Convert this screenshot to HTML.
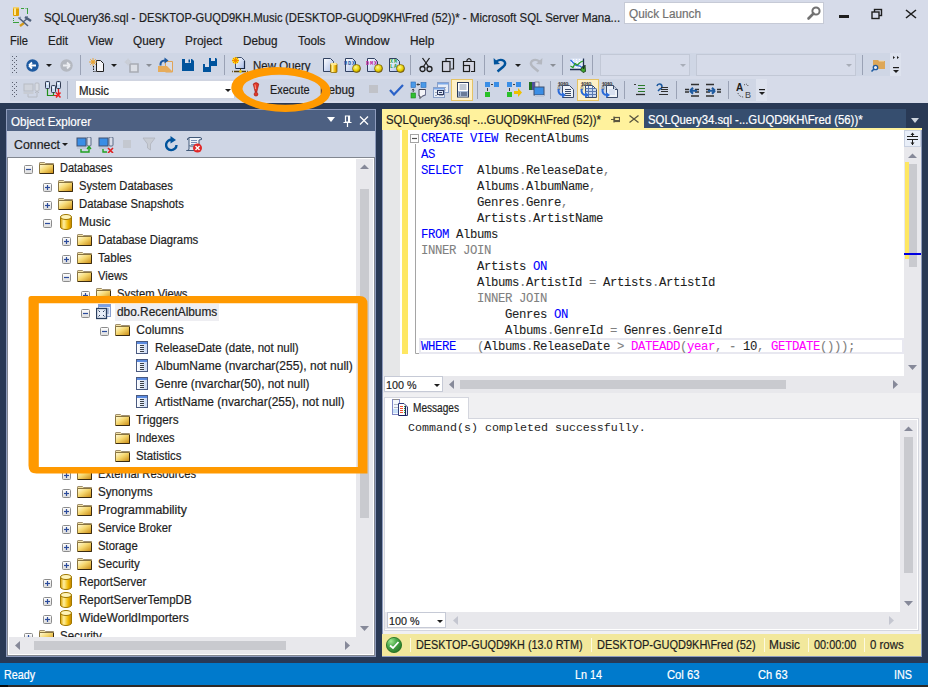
<!DOCTYPE html>
<html><head><meta charset="utf-8"><style>
html,body{margin:0;padding:0;}
body{width:928px;height:687px;overflow:hidden;position:relative;background:#293955;font-family:"Liberation Sans",sans-serif;}
.t{position:absolute;white-space:pre;-webkit-text-stroke:0.2px currentColor;}
.r{position:absolute;}
</style></head><body>
<div class="r" style="left:0px;top:0px;width:928px;height:103px;background:#d6dbe9;"></div>
<svg class="r" style="left:8px;top:0px;" width="30" height="30" viewBox="0 0 30 30">
<rect x="5" y="7" width="6" height="9" rx="1" fill="#e0a000"/><rect x="6" y="8" width="2" height="7" fill="#ffe890"/><rect x="5" y="7" width="6" height="1.5" fill="#f0d070"/>
<path d="M13 8.5h3M17.5 8.5h1M19.5 8v6M5.5 18v1M5.5 20v1M5 22.5h6" stroke="#3aa03a" stroke-width="1"/>
<path d="M12 26 L16 23" stroke="#d49a1a" stroke-width="2.2"/><path d="M10.5 17.5 L20 26" stroke="#50607a" stroke-width="1.6"/>
<path d="M17 17 L23 21" stroke="#50607a" stroke-width="2.4"/><path d="M18 16.5 l2 0 M11 18 l2 -1" stroke="#8090a8" stroke-width="1.2"/><path d="M15 22 L20 18" stroke="#50607a" stroke-width="1.4"/>
</svg>
<div class="t" style="left:44.00px;top:10.34px;font-size:12.00px;line-height:17px;color:#1e1e1e;transform:scaleX(0.9519);transform-origin:0 0;font-family:"Liberation Sans", sans-serif;">SQLQuery36.sql - </div>
<div class="t" style="left:138.60px;top:10.34px;font-size:12.00px;line-height:17px;color:#1e1e1e;transform:scaleX(0.9257);transform-origin:0 0;font-family:"Liberation Sans", sans-serif;">DESKTOP-GUQD9KH.Music </div>
<div class="t" style="left:285.30px;top:10.34px;font-size:12.00px;line-height:17px;color:#1e1e1e;transform:scaleX(0.9395);transform-origin:0 0;font-family:"Liberation Sans", sans-serif;">(DESKTOP-GUQD9KH\Fred (52))* - </div>
<div class="t" style="left:469.90px;top:10.34px;font-size:12.00px;line-height:17px;color:#1e1e1e;transform:scaleX(0.9523);transform-origin:0 0;font-family:"Liberation Sans", sans-serif;">Microsoft SQL Server Mana...</div>
<div class="r" style="left:624px;top:2px;width:198px;height:20px;background:#ffffff;border:1px solid #c6cad6;"></div>
<div class="t" style="left:629.00px;top:5.84px;font-size:12.00px;line-height:17px;color:#717171;transform:scaleX(0.9812);transform-origin:0 0;font-family:"Liberation Sans", sans-serif;">Quick Launch</div>
<svg class="r" style="left:806px;top:5px;" width="16" height="16" viewBox="0 0 16 16"><circle cx="10" cy="6" r="3.6" fill="none" stroke="#717171" stroke-width="2"/><path d="M7.5 8.5 L2.5 13.5" stroke="#717171" stroke-width="2.6" stroke-linecap="round"/></svg>
<div class="r" style="left:839px;top:15px;width:10px;height:3px;background:#1e1e1e;"></div>
<svg class="r" style="left:871px;top:8px;" width="12" height="12" viewBox="0 0 12 12"><rect x="3.5" y="1.5" width="7" height="6" fill="none" stroke="#1e1e1e" stroke-width="1.4"/><rect x="1" y="4" width="7" height="6.5" fill="#d6dbe9" stroke="#1e1e1e" stroke-width="1.4"/></svg>
<svg class="r" style="left:905px;top:9px;" width="12" height="10" viewBox="0 0 12 10"><path d="M1 1 L11 9 M11 1 L1 9" stroke="#1e1e1e" stroke-width="1.6"/></svg>
<div class="t" style="left:10.00px;top:33.04px;font-size:12.00px;line-height:17px;color:#1e1e1e;transform:scaleX(0.9308);transform-origin:0 0;font-family:"Liberation Sans", sans-serif;">File</div>
<div class="t" style="left:48.00px;top:33.04px;font-size:12.00px;line-height:17px;color:#1e1e1e;transform:scaleX(0.9672);transform-origin:0 0;font-family:"Liberation Sans", sans-serif;">Edit</div>
<div class="t" style="left:88.00px;top:33.04px;font-size:12.00px;line-height:17px;color:#1e1e1e;transform:scaleX(0.9692);transform-origin:0 0;font-family:"Liberation Sans", sans-serif;">View</div>
<div class="t" style="left:133.00px;top:33.04px;font-size:12.00px;line-height:17px;color:#1e1e1e;transform:scaleX(0.9792);transform-origin:0 0;font-family:"Liberation Sans", sans-serif;">Query</div>
<div class="t" style="left:185.00px;top:33.04px;font-size:12.00px;line-height:17px;color:#1e1e1e;transform:scaleX(0.9906);transform-origin:0 0;font-family:"Liberation Sans", sans-serif;">Project</div>
<div class="t" style="left:242.50px;top:33.04px;font-size:12.00px;line-height:17px;color:#1e1e1e;transform:scaleX(0.9756);transform-origin:0 0;font-family:"Liberation Sans", sans-serif;">Debug</div>
<div class="t" style="left:297.50px;top:33.04px;font-size:12.00px;line-height:17px;color:#1e1e1e;transform:scaleX(0.9816);transform-origin:0 0;font-family:"Liberation Sans", sans-serif;">Tools</div>
<div class="t" style="left:345.00px;top:33.04px;font-size:12.00px;line-height:17px;color:#1e1e1e;transform:scaleX(1.0426);transform-origin:0 0;font-family:"Liberation Sans", sans-serif;">Window</div>
<div class="t" style="left:409.50px;top:33.04px;font-size:12.00px;line-height:17px;color:#1e1e1e;transform:scaleX(0.9825);transform-origin:0 0;font-family:"Liberation Sans", sans-serif;">Help</div>
<div class="r" style="left:10px;top:53px;width:891px;height:23px;background:#cfd6e5;"></div>
<div class="r" style="left:890px;top:53px;width:11px;height:23px;background:#dde2ee;"></div>
<div class="r" style="left:10px;top:79px;width:757px;height:22px;background:#cfd6e5;"></div>
<div class="r" style="left:756px;top:79px;width:11px;height:22px;background:#dde2ee;"></div>
<svg class="r" style="left:12px;top:56px;" width="5" height="17" viewBox="0 0 5 17"><rect x="0" y="0" width="1" height="1" fill="#5a6070"/><rect x="4" y="0" width="1" height="1" fill="#5a6070"/><rect x="2" y="2" width="1" height="1" fill="#5a6070"/><rect x="0" y="4" width="1" height="1" fill="#5a6070"/><rect x="4" y="4" width="1" height="1" fill="#5a6070"/><rect x="2" y="6" width="1" height="1" fill="#5a6070"/><rect x="0" y="8" width="1" height="1" fill="#5a6070"/><rect x="4" y="8" width="1" height="1" fill="#5a6070"/><rect x="2" y="10" width="1" height="1" fill="#5a6070"/><rect x="0" y="12" width="1" height="1" fill="#5a6070"/><rect x="4" y="12" width="1" height="1" fill="#5a6070"/><rect x="2" y="14" width="1" height="1" fill="#5a6070"/><rect x="0" y="16" width="1" height="1" fill="#5a6070"/><rect x="4" y="16" width="1" height="1" fill="#5a6070"/></svg>
<svg class="r" style="left:12px;top:82px;" width="5" height="15" viewBox="0 0 5 15"><rect x="0" y="0" width="1" height="1" fill="#5a6070"/><rect x="4" y="0" width="1" height="1" fill="#5a6070"/><rect x="2" y="2" width="1" height="1" fill="#5a6070"/><rect x="0" y="4" width="1" height="1" fill="#5a6070"/><rect x="4" y="4" width="1" height="1" fill="#5a6070"/><rect x="2" y="6" width="1" height="1" fill="#5a6070"/><rect x="0" y="8" width="1" height="1" fill="#5a6070"/><rect x="4" y="8" width="1" height="1" fill="#5a6070"/><rect x="2" y="10" width="1" height="1" fill="#5a6070"/><rect x="0" y="12" width="1" height="1" fill="#5a6070"/><rect x="4" y="12" width="1" height="1" fill="#5a6070"/><rect x="2" y="14" width="1" height="1" fill="#5a6070"/></svg>
<svg class="r" style="left:26px;top:59px;" width="13" height="13" viewBox="0 0 13 13"><circle cx="6.5" cy="6.5" r="6.2" fill="#1e5aa0"/><path d="M3 6.5 H10 M3 6.5 L6 3.5 M3 6.5 L6 9.5" stroke="#fff" stroke-width="1.8" fill="none"/></svg>
<svg class="r" style="left:46px;top:64px;" width="6" height="3" viewBox="0 0 6 3"><path d="M0 0 H6 L3 3 Z" fill="#1e1e1e"/></svg>
<svg class="r" style="left:60px;top:59px;" width="13" height="13" viewBox="0 0 13 13"><circle cx="6.5" cy="6.5" r="6.2" fill="#b4b8c0"/><path d="M10 6.5 H3 M10 6.5 L7 3.5 M10 6.5 L7 9.5" stroke="#eceef2" stroke-width="1.8" fill="none"/></svg>
<div class="r" style="left:80px;top:55px;width:1px;height:20px;background:#9aa2b5;"></div>
<svg class="r" style="left:89px;top:58px;" width="16" height="16" viewBox="0 0 16 16"><path d="M7.5 2.5 H11.5 L14.5 5.5 V13.5 H7.5 Z" fill="#f4f4f6" stroke="#1e1e1e" stroke-width="1"/><path d="M4.5 8 V13.5 H7" stroke="#1e1e1e" stroke-width="1" fill="none" stroke-dasharray="1.5 1"/><circle cx="4" cy="4" r="1.8" fill="#f0b040"/><path d="M4 0V8M0 4H8M1.2 1.2L6.8 6.8M6.8 1.2L1.2 6.8" stroke="#e8a030" stroke-width="0.9"/></svg>
<svg class="r" style="left:111px;top:64px;" width="6" height="3" viewBox="0 0 6 3"><path d="M0 0 H6 L3 3 Z" fill="#1e1e1e"/></svg>
<svg class="r" style="left:124px;top:58px;" width="16" height="16" viewBox="0 0 16 16"><path d="M6 6 H14 V14 H6 Z" fill="#dcdfe6" stroke="#a8acb4" stroke-width="1.6"/><circle cx="4" cy="4" r="2" fill="none" stroke="#c8ccd4" stroke-width="1.2"/><path d="M4 0.5V7.5M0.5 4H7.5" stroke="#c8ccd4" stroke-width="1"/></svg>
<svg class="r" style="left:146px;top:64px;" width="6" height="3" viewBox="0 0 6 3"><path d="M0 0 H6 L3 3 Z" fill="#8a8e96"/></svg>
<svg class="r" style="left:158px;top:57px;" width="16" height="16" viewBox="0 0 16 16"><path d="M7.5 4.5 H14.5 V15 H7.5 Z" fill="#d8dce6" stroke="#e0a458" stroke-width="1"/><path d="M1 9 H9 L15 15 H2 Z" fill="#e6ac5c"/><path d="M1 9 V15" stroke="#e6ac5c" stroke-width="2"/><path d="M2.5 8.5 Q2 3.5 7 3.5" stroke="#1e5aa0" stroke-width="2" fill="none"/><path d="M6.5 0.5 L10.5 3.5 L6.5 6.5 Z" fill="#1e5aa0"/></svg>
<svg class="r" style="left:181px;top:58px;" width="14" height="14" viewBox="0 0 14 14"><path d="M1 1 H11 L13 3 V13 H1 Z" fill="#00539c"/><rect x="4" y="1" width="6" height="4" fill="#d6dbe9"/><rect x="7.5" y="1.5" width="1.5" height="3" fill="#00539c"/></svg>
<svg class="r" style="left:202px;top:57px;" width="16" height="16" viewBox="0 0 16 16"><path d="M7 1 H14 L15 2 V9 H7 Z" fill="#00539c"/><rect x="9" y="1" width="4" height="3" fill="#d6dbe9"/><path d="M1 7 H8 L9 8 V15 H1 Z" fill="#00539c"/><rect x="3" y="7" width="4" height="3" fill="#d6dbe9"/></svg>
<div class="r" style="left:224px;top:55px;width:1px;height:20px;background:#9aa2b5;"></div>
<svg class="r" style="left:231px;top:56px;" width="18" height="18" viewBox="0 0 18 18"><path d="M4.5 1.5 H10.5 L13.5 4.5 V12.5 H4.5 Z" fill="url(#docg)" stroke="#405070" stroke-width="1"/><path d="M5 12.5 H13.5 V5" stroke="#1a2a48" stroke-width="1.2" fill="none"/><circle cx="4.5" cy="4.5" r="3.2" fill="#ffe000"/><path d="M4.5 1 V8 M1 4.5 H8 M2 2 L7 7 M7 2 L2 7" stroke="#f08000" stroke-width="0.9"/><path d="M1 15.5 H1.8 M3 15.5 H15 M16.2 15.5 H17" stroke="#5a4008" stroke-width="1.5"/><path d="M9.5 12.5 V15" stroke="#5a4008" stroke-width="1"/><path d="M9.5 13.5 L11 15.5 L9.5 17.5 L8 15.5 Z" fill="#f0d000"/></svg>
<div class="t" style="left:253.00px;top:57.64px;font-size:12.00px;line-height:17px;color:#1e1e1e;transform:scaleX(0.9580);transform-origin:0 0;font-family:"Liberation Sans", sans-serif;">New Query</div>
<svg width="0" height="0" style="position:absolute"><defs><linearGradient id="docg" x1="0" y1="0" x2="1" y2="1"><stop offset="0" stop-color="#ffffff"/><stop offset="1" stop-color="#a8bce8"/></linearGradient><radialGradient id="ballg" cx="0.4" cy="0.35" r="0.7"><stop offset="0" stop-color="#fff890"/><stop offset="0.6" stop-color="#e8d000"/><stop offset="1" stop-color="#806000"/></radialGradient></defs></svg>
<svg class="r" style="left:322px;top:57px;" width="17" height="16" viewBox="0 0 17 16"><path d="M1.5 1.5 H8.5 L11.5 4.5 V14.5 H1.5 Z" fill="url(#docg)" stroke="#304060" stroke-width="1"/><rect x="8.5" y="6.5" width="6.5" height="9" rx="1" fill="url(#cg)" stroke="#8a6a00" stroke-width="0.8"/><ellipse cx="11.75" cy="7" rx="3.2" ry="1.2" fill="#ffe890"/></svg>
<svg class="r" style="left:344px;top:57px;" width="17" height="16" viewBox="0 0 17 16"><path d="M1.5 1.5 H8.5 L11.5 4.5 V14.5 H1.5 Z" fill="url(#docg)" stroke="#304060" stroke-width="1"/><text x="0" y="8" font-size="5.2" font-family="Liberation Mono" fill="#1a5aa8" font-weight="bold" textLength="11">MDX</text><circle cx="12.5" cy="11.5" r="4" fill="url(#ballg)" stroke="#604800" stroke-width="0.6"/></svg>
<svg class="r" style="left:366px;top:57px;" width="17" height="16" viewBox="0 0 17 16"><path d="M1.5 1.5 H8.5 L11.5 4.5 V14.5 H1.5 Z" fill="url(#docg)" stroke="#304060" stroke-width="1"/><text x="0" y="8" font-size="5.2" font-family="Liberation Mono" fill="#c020a0" font-weight="bold" textLength="11">DMX</text><circle cx="12.5" cy="11.5" r="4" fill="url(#ballg)" stroke="#604800" stroke-width="0.6"/></svg>
<svg class="r" style="left:388px;top:57px;" width="17" height="16" viewBox="0 0 17 16"><path d="M1.5 1.5 H8.5 L11.5 4.5 V14.5 H1.5 Z" fill="url(#docg)" stroke="#304060" stroke-width="1"/><text x="2" y="6" font-size="5" font-family="Liberation Mono" fill="#20a040" font-weight="bold" textLength="7">XM</text><text x="2" y="11" font-size="5" font-family="Liberation Mono" fill="#20a040" font-weight="bold" textLength="7">LA</text><circle cx="12.5" cy="11.5" r="4" fill="url(#ballg)" stroke="#604800" stroke-width="0.6"/></svg>
<div class="r" style="left:410px;top:55px;width:1px;height:20px;background:#9aa2b5;"></div>
<svg class="r" style="left:419px;top:57px;" width="14" height="16" viewBox="0 0 14 16"><circle cx="3.5" cy="12" r="2.5" fill="none" stroke="#1e1e1e" stroke-width="1.3"/><circle cx="10.5" cy="12" r="2.5" fill="none" stroke="#1e1e1e" stroke-width="1.3"/><path d="M4.5 9.5 L10.5 1 M9.5 9.5 L3.5 1" stroke="#1e1e1e" stroke-width="1.3"/></svg>
<svg class="r" style="left:441px;top:57px;" width="14" height="16" viewBox="0 0 14 16"><path d="M5 4 V1.5 H12.5 V12 H10" stroke="#1e1e1e" stroke-width="1.2" fill="none"/><rect x="1.5" y="4.5" width="7.5" height="10" fill="#d4d6e2" stroke="#1e1e1e" stroke-width="1.2"/></svg>
<svg class="r" style="left:462px;top:57px;" width="14" height="16" viewBox="0 0 14 16"><path d="M1.5 8.5 V4.5 H12.5 V14.5 H9" stroke="#1e1e1e" stroke-width="1.2" fill="#d4d6e2"/><path d="M5 4.5 V3 Q7 0.3 9 3 V4.5" stroke="#1e1e1e" stroke-width="1.2" fill="none"/><rect x="1.5" y="8.5" width="6" height="6" fill="#d4d6e2" stroke="#1e1e1e" stroke-width="1.2"/></svg>
<div class="r" style="left:484px;top:55px;width:1px;height:20px;background:#9aa2b5;"></div>
<svg class="r" style="left:493px;top:57px;" width="14" height="16" viewBox="0 0 14 16"><path d="M3.5 4.5 Q7.5 1.5 11 4 Q13.5 6.5 10.5 9.5 L4.5 14.5" stroke="#00539c" stroke-width="2.4" fill="none"/><path d="M0.6 1 L1 7.5 L7 7 Z" fill="#00539c"/></svg>
<svg class="r" style="left:515px;top:64px;" width="6" height="3" viewBox="0 0 6 3"><path d="M0 0 H6 L3 3 Z" fill="#1e1e1e"/></svg>
<svg class="r" style="left:529px;top:57px;" width="14" height="16" viewBox="0 0 14 16"><path d="M10.5 4.5 Q6.5 1.5 3 4 Q0.5 6.5 3.5 9.5 L9.5 14.5" stroke="#b4b8c0" stroke-width="2.4" fill="none"/><path d="M13.4 1 L13 7.5 L7 7 Z" fill="#b4b8c0"/></svg>
<svg class="r" style="left:550px;top:64px;" width="6" height="3" viewBox="0 0 6 3"><path d="M0 0 H6 L3 3 Z" fill="#8a8e96"/></svg>
<div class="r" style="left:562px;top:55px;width:1px;height:20px;background:#9aa2b5;"></div>
<svg class="r" style="left:569px;top:57px;" width="18" height="17" viewBox="0 0 18 17"><rect x="1.5" y="1.5" width="13" height="11" fill="#dfe8fa"/><path d="M4.5 2 V12 M7.5 2 V12 M10.5 2 V12 M2 5.5 H14 M2 9 H14" stroke="#ffffff" stroke-width="1" stroke-dasharray="1 1"/><path d="M1 12.5 H14.5 V1.5" stroke="#203050" stroke-width="1.3" fill="none"/><path d="M1.5 3 L4.5 6 L7 8.5 L11 9 L13 10.5" stroke="#2a6ae0" stroke-width="1.3" fill="none"/><path d="M1.5 9 L4 10.5 L6 6.5 L8.5 8 L11 5.5 L14 4" stroke="#2a9a2a" stroke-width="1.3" fill="none"/><path d="M11.5 13 L13.5 9.5 L14.5 12 L16 8 L16.5 14.5 L14 15.5 Z" fill="#40a830" stroke="#103010" stroke-width="0.8"/></svg>
<div class="r" style="left:592px;top:55px;width:1px;height:20px;background:#9aa2b5;"></div>
<div class="r" style="left:600px;top:54px;width:90px;height:22px;background:#d6dbe9;border:1px solid #c2c8d6;box-sizing:border-box;"></div>
<svg class="r" style="left:680px;top:64px;" width="6" height="3" viewBox="0 0 6 3"><path d="M0 0 H6 L3 3 Z" fill="#a8adb8"/></svg>
<div class="r" style="left:696px;top:54px;width:160px;height:22px;background:#d6dbe9;border:1px solid #c2c8d6;box-sizing:border-box;"></div>
<svg class="r" style="left:846px;top:64px;" width="6" height="3" viewBox="0 0 6 3"><path d="M0 0 H6 L3 3 Z" fill="#a8adb8"/></svg>
<div class="r" style="left:862px;top:55px;width:1px;height:20px;background:#9aa2b5;"></div>
<svg class="r" style="left:870px;top:57px;" width="16" height="16" viewBox="0 0 16 16"><path d="M3 3 H8 L9 4 H15 V12 H3 Z" fill="#dda758"/><rect x="9" y="3.5" width="5" height="1" fill="#f4d8a8"/><circle cx="5.5" cy="10.5" r="2.2" fill="#e8ecf4" stroke="#1e5aa0" stroke-width="1.3"/><path d="M4 12 L1.5 14.5" stroke="#1e5aa0" stroke-width="1.6"/></svg>
<svg class="r" style="left:892px;top:55px;" width="8" height="20" viewBox="0 0 8 20"><path d="M1 1 L3 2.5 L1 4 Z M5 1 L7 2.5 L5 4 Z" fill="#1e1e1e"/><rect x="1" y="12" width="6" height="1.2" fill="#1e1e1e"/><path d="M1 15 H7 L4 18 Z" fill="#1e1e1e"/></svg>
<svg class="r" style="left:23px;top:82px;" width="17" height="17" viewBox="0 0 17 17"><rect x="1" y="2" width="9" height="7" fill="#d0d4dc" stroke="#b8bcc4" stroke-width="1"/><rect x="0.5" y="10" width="10" height="2" fill="#c8ccd4"/><rect x="12" y="1" width="4" height="8" rx="1" fill="#d8dce4" stroke="#b8bcc4" stroke-width="1"/><path d="M5 12 V15 H14 V9 M12 11 L14 9 L16 11" stroke="#b8bcc4" stroke-width="1" fill="none"/></svg>
<svg class="r" style="left:44px;top:81px;" width="18" height="18" viewBox="0 0 18 18"><rect x="1.5" y="0.5" width="4" height="7" rx="0.8" fill="#c8dcf4" stroke="#303a50" stroke-width="1"/><rect x="2.5" y="2" width="2" height="1.5" fill="#fff"/><rect x="7.5" y="4.5" width="4" height="7" rx="0.8" fill="#c8dcf4" stroke="#303a50" stroke-width="1"/><rect x="8.5" y="6" width="2" height="1.5" fill="#fff"/><rect x="12.5" y="0.5" width="4" height="7" rx="0.8" fill="#c8dcf4" stroke="#303a50" stroke-width="1"/><rect x="13.5" y="2" width="2" height="1.5" fill="#fff"/><path d="M3.5 8 V14.5 H9.5 V12" stroke="#20901a" stroke-width="1.2" fill="none"/><path d="M14.5 8 V14 M9.5 14.5 H13" stroke="#e02020" stroke-width="1.2" fill="none"/><path d="M12 11.5 L16.5 16.5 M16.5 11.5 L12 16.5" stroke="#f02020" stroke-width="1.5"/></svg>
<div class="r" style="left:67px;top:81px;width:1px;height:18px;background:#9aa2b5;"></div>
<div class="r" style="left:75px;top:80px;width:160px;height:19px;background:#ffffff;border:1px solid #d0d4e0;box-sizing:border-box;"></div>
<div class="t" style="left:78.60px;top:82.94px;font-size:12.00px;line-height:17px;color:#1e1e1e;transform:scaleX(0.9573);transform-origin:0 0;font-family:"Liberation Sans", sans-serif;">Music</div>
<svg class="r" style="left:225px;top:89px;" width="6" height="3" viewBox="0 0 6 3"><path d="M0 0 H6 L3 3 Z" fill="#1e1e1e"/></svg>
<svg class="r" style="left:252px;top:82px;" width="8" height="15" viewBox="0 0 8 15"><path d="M1.2 2 Q4 -0.8 6.8 2 L4.8 10 H3.2 Z" fill="#e03828" stroke="#a01810" stroke-width="0.6"/><circle cx="4" cy="12.2" r="1.9" fill="#e03828" stroke="#a01810" stroke-width="0.6"/><path d="M3 2.5 L3.6 7" stroke="#ffb0a0" stroke-width="0.8"/></svg>
<div class="t" style="left:269.80px;top:81.84px;font-size:12.00px;line-height:17px;color:#1e1e1e;transform:scaleX(0.9110);transform-origin:0 0;font-family:"Liberation Sans", sans-serif;">Execute</div>
<div class="t" style="left:320.00px;top:81.84px;font-size:12.00px;line-height:17px;color:#1e1e1e;transform:scaleX(0.9756);transform-origin:0 0;font-family:"Liberation Sans", sans-serif;">Debug</div>
<div class="r" style="left:369px;top:85px;width:9px;height:8px;background:#c0c2c8;"></div>
<svg class="r" style="left:389px;top:84px;" width="15" height="12" viewBox="0 0 15 12"><path d="M1 6 L5 10.5 L14 1" stroke="#2a62c8" stroke-width="2.2" fill="none"/></svg>
<svg class="r" style="left:410px;top:81px;" width="17" height="18" viewBox="0 0 17 18"><rect x="1" y="1" width="4.5" height="5.5" fill="#4a9ae8" stroke="#2a6ab8" stroke-width="0.6"/><rect x="11" y="1.5" width="5" height="5" fill="#4a9ae8" stroke="#2a6ab8" stroke-width="0.6"/><path d="M7 3.5 H10 M7 3.5 L8.2 2.3 M7 3.5 L8.2 4.7" stroke="#303030" stroke-width="0.9" fill="none"/><rect x="1" y="12" width="4.5" height="5" fill="#30c030" stroke="#208020" stroke-width="0.6"/><path d="M3.2 11 V8 M3.2 8 L2 9.2 M3.2 8 L4.4 9.2" stroke="#303030" stroke-width="0.9" fill="none"/><path d="M9 8.5 H15.5 V14 L12.5 15 L10 17.5 V15 H9 Z" fill="#f4f4f8" stroke="#404050" stroke-width="1"/><path d="M15.5 9 V14 L12.5 15" stroke="#6a7090" stroke-width="1" fill="none"/></svg>
<svg class="r" style="left:432px;top:81px;" width="17" height="18" viewBox="0 0 17 18"><rect x="5.5" y="1.5" width="11" height="10" fill="#e8eef8" stroke="#8aa0c8" stroke-width="1"/><rect x="6" y="2" width="10" height="1.5" fill="#7aa8e8"/><path d="M8 6.5 H10 M11.5 6.5 H14 M8 9 H10 M11.5 9 H14" stroke="#a0a8b8" stroke-width="1"/><rect x="1.5" y="6.5" width="11" height="10" fill="#e8eef8" stroke="#8aa0c8" stroke-width="1"/><rect x="2" y="7" width="10" height="1.5" fill="#7aa8e8"/><path d="M3 11.5 H5 M3 14.5 H5 M7 14.5 H11" stroke="#a0a8b8" stroke-width="1"/><rect x="5.5" y="9.5" width="6" height="4" fill="#e0e8f4" stroke="#303a60" stroke-width="1"/><path d="M7 11.5 H10" stroke="#303a60" stroke-width="1"/></svg>
<div class="r" style="left:451px;top:79px;width:22px;height:22px;background:#fdf0c8;border:1px solid #e5c365;box-sizing:border-box;"></div>
<svg class="r" style="left:456px;top:82px;" width="14" height="16" viewBox="0 0 14 16"><rect x="1.5" y="0.5" width="11" height="14.5" fill="#ffffff" stroke="#2a3a5a" stroke-width="1"/><path d="M3.5 3 H10.5 M3.5 5 H10.5 M3.5 7 H10.5" stroke="#8090a8" stroke-width="1"/><rect x="2" y="9" width="10" height="5.5" fill="#a8bcd8"/><path d="M3 11 H4 M5 11 H11 M3 13 H4 M5 13 H11" stroke="#2a3a5a" stroke-width="1"/></svg>
<div class="r" style="left:477px;top:81px;width:1px;height:18px;background:#9aa2b5;"></div>
<svg class="r" style="left:484px;top:81px;" width="17" height="17" viewBox="0 0 17 17"><rect x="1" y="1" width="5" height="5" fill="#3a8ee6"/><rect x="10" y="1" width="5" height="5" fill="#3a8ee6"/><path d="M7 3.5 H9" stroke="#404040" stroke-width="1"/><rect x="1" y="11" width="5" height="5" fill="#28c028"/><path d="M3.5 7 V10" stroke="#404040" stroke-width="1"/></svg>
<svg class="r" style="left:506px;top:81px;" width="17" height="17" viewBox="0 0 17 17"><rect x="1" y="1" width="5" height="5" fill="#3a8ee6"/><rect x="10" y="1" width="5" height="5" fill="#3a8ee6"/><path d="M7 3.5 H9" stroke="#404040" stroke-width="1"/><rect x="1" y="11" width="5" height="5" fill="#28c028"/><path d="M3.5 7 V10" stroke="#404040" stroke-width="1"/><path d="M8 10 H12 V7 L16 11.5 L12 16 V13 H8 Z" fill="#f0c000"/></svg>
<svg class="r" style="left:528px;top:81px;" width="17" height="18" viewBox="0 0 17 18"><rect x="1" y="1" width="3" height="8" fill="#207020"/><rect x="4" y="1" width="3" height="8" fill="#5050a0"/><rect x="7" y="1" width="4" height="8" fill="#e0e0e8" stroke="#606070" stroke-width="0.6"/><rect x="6" y="6" width="10" height="8" fill="#3a8ee6" stroke="#405070" stroke-width="1"/><rect x="7" y="14" width="9" height="2" fill="#c0c8d8"/></svg>
<div class="r" style="left:550px;top:81px;width:1px;height:18px;background:#9aa2b5;"></div>
<svg class="r" style="left:557px;top:80px;" width="17" height="19" viewBox="0 0 17 19"><text x="0.5" y="5.5" font-size="6" font-family="Liberation Mono" font-weight="bold" fill="#404040" textLength="11">1010</text><text x="0.5" y="9.5" font-size="5" font-family="Liberation Mono" fill="#404040">0</text><path d="M5.5 5.5 H12.5 L16.5 9.5 V17.5 H5.5 Z" fill="#eef2f8" stroke="#3a4a68" stroke-width="1"/><path d="M8 9.5 H14 M8 11.5 H14 M8 13.5 H14 M8 15.5 H14" stroke="#3a4a68" stroke-width="1"/><path d="M1.5 9 Q1 15 6 15" stroke="#2a6ad8" stroke-width="2" fill="none"/><path d="M5 12 L9 15 L5 18 Z" fill="#2a6ad8"/></svg>
<div class="r" style="left:577px;top:79px;width:22px;height:22px;background:#fdf0c8;border:1px solid #e5c365;box-sizing:border-box;"></div>
<svg class="r" style="left:580px;top:80px;" width="17" height="19" viewBox="0 0 17 19"><text x="0.5" y="5.5" font-size="6" font-family="Liberation Mono" font-weight="bold" fill="#404040" textLength="11">1010</text><text x="0.5" y="9.5" font-size="5" font-family="Liberation Mono" fill="#404040">0</text><path d="M5.5 5.5 H12.5 L16.5 9.5 V17.5 H5.5 Z" fill="#eef2f8" stroke="#3a4a68" stroke-width="1"/><rect x="6" y="8" width="10" height="9" fill="#c8d8f0"/><path d="M5.5 8.5 H16.5 M5.5 11.5 H16.5 M5.5 14.5 H16.5 M8.5 6 V17 M12.5 6 V17" stroke="#5a7ab0" stroke-width="1"/><path d="M1.5 9 Q1 15 6 15" stroke="#2a6ad8" stroke-width="2" fill="none"/><path d="M5 12 L9 15 L5 18 Z" fill="#2a6ad8"/></svg>
<svg class="r" style="left:601px;top:80px;" width="17" height="19" viewBox="0 0 17 19"><text x="0.5" y="5.5" font-size="6" font-family="Liberation Mono" font-weight="bold" fill="#404040" textLength="11">1010</text><text x="0.5" y="9.5" font-size="5" font-family="Liberation Mono" fill="#404040">0</text><path d="M5.5 5.5 H12.5 L16.5 9.5 V17.5 H5.5 Z" fill="#eef2f8" stroke="#3a4a68" stroke-width="1"/><path d="M12.5 5.5 V9.5 H16.5" fill="#c0cce0" stroke="#3a4a68" stroke-width="1"/><rect x="8" y="9" width="6" height="6" fill="#d8e0f0"/><path d="M1.5 9 Q1 15 6 15" stroke="#2a6ad8" stroke-width="2" fill="none"/><path d="M5 12 L9 15 L5 18 Z" fill="#2a6ad8"/></svg>
<div class="r" style="left:624px;top:81px;width:1px;height:18px;background:#9aa2b5;"></div>
<svg class="r" style="left:633px;top:83px;" width="13" height="13" viewBox="0 0 13 13"><path d="M1 1.5 H3" stroke="#404040" stroke-width="1"/><path d="M5 2.5 H12 M5 5.5 H12 M5 8.5 H12" stroke="#2a7a2a" stroke-width="1.2"/><path d="M3 11.5 H12" stroke="#303030" stroke-width="1.3"/></svg>
<svg class="r" style="left:655px;top:83px;" width="14" height="13" viewBox="0 0 14 13"><path d="M2 3 A2.5 2.5 0 1 1 5 6 L3 8" stroke="#1e5aa0" stroke-width="1.6" fill="none"/><path d="M6 4.5 H13 M6 6.5 H13 M6 8.5 H13 M4 11.5 H13" stroke="#303030" stroke-width="1.1"/></svg>
<div class="r" style="left:676px;top:81px;width:1px;height:18px;background:#9aa2b5;"></div>
<svg class="r" style="left:685px;top:83px;" width="15" height="14" viewBox="0 0 15 14"><path d="M6 1.5 H14 M0 6.5 H4 M10 6.5 H14 M0 9 H4 M10 9 H14 M6 13 H14" stroke="#303030" stroke-width="1.4"/><path d="M5 7.8 H12 M5 7.8 L8 4.8 M5 7.8 L8 10.8" stroke="#1e5aa0" stroke-width="2" fill="none"/></svg>
<svg class="r" style="left:706px;top:83px;" width="15" height="14" viewBox="0 0 15 14"><path d="M0 1.5 H8 M0 6.5 H4 M11 6.5 H15 M0 9 H4 M11 9 H15 M0 13 H8" stroke="#303030" stroke-width="1.4"/><path d="M2 7.8 H9 M9 7.8 L6 4.8 M9 7.8 L6 10.8" stroke="#1e5aa0" stroke-width="2" fill="none"/></svg>
<div class="r" style="left:728px;top:81px;width:1px;height:18px;background:#9aa2b5;"></div>
<svg class="r" style="left:736px;top:82px;" width="17" height="17" viewBox="0 0 17 17"><text x="0" y="9" font-size="10" font-family="Liberation Sans" font-weight="bold" fill="#1e1e1e">A</text><text x="9" y="16" font-size="9" font-family="Liberation Sans" fill="#404040">B</text><path d="M8 3 Q11 1 12 4 M2 11 Q3 15 8 15" stroke="#303030" stroke-width="0.9" stroke-dasharray="1 1" fill="none"/></svg>
<svg class="r" style="left:759px;top:89px;" width="6" height="9" viewBox="0 0 6 9"><rect x="0" y="0" width="6" height="1.2" fill="#1e1e1e"/><path d="M0 3 H6 L3 6 Z" fill="#1e1e1e"/></svg>
<div class="r" style="left:6px;top:109px;width:370px;height:548px;background:#8e9bbc;"></div>
<div class="r" style="left:7px;top:110px;width:368px;height:21px;background:#4d6082;"></div>
<div class="t" style="left:11.00px;top:113.84px;font-size:12.00px;line-height:17px;color:#ffffff;transform:scaleX(0.9673);transform-origin:0 0;font-family:"Liberation Sans", sans-serif;">Object Explorer</div>
<svg class="r" style="left:327px;top:117px;" width="8" height="5" viewBox="0 0 8 5"><path d="M0 0 H8 L4 5 Z" fill="#ffffff"/></svg>
<svg class="r" style="left:343px;top:115px;" width="9" height="12" viewBox="0 0 9 12"><path d="M2.5 1 H6.5 V7 H2.5 Z" fill="none" stroke="#fff" stroke-width="1.2"/><path d="M0.5 7.5 H8.5 M4.5 7.5 V12" stroke="#fff" stroke-width="1.2"/><rect x="5" y="1" width="1.5" height="6" fill="#fff"/></svg>
<svg class="r" style="left:359px;top:116px;" width="10" height="9" viewBox="0 0 10 9"><path d="M1 0.5 L9 8.5 M9 0.5 L1 8.5" stroke="#fff" stroke-width="1.3"/></svg>
<div class="r" style="left:7px;top:131px;width:368px;height:26px;background:#cfd6e5;"></div>
<div class="t" style="left:14.00px;top:136.94px;font-size:12.00px;line-height:17px;color:#1e1e1e;transform:scaleX(1.0291);transform-origin:0 0;font-family:"Liberation Sans", sans-serif;">Connect</div>
<svg class="r" style="left:62px;top:143px;" width="6" height="3" viewBox="0 0 6 3"><path d="M0 0 H6 L3 3 Z" fill="#1e1e1e"/></svg>
<svg class="r" style="left:76px;top:137px;" width="16" height="16" viewBox="0 0 16 16"><rect x="1" y="1" width="9" height="8" fill="#3a8ee6" stroke="#405070" stroke-width="1"/><rect x="1" y="10" width="9" height="2" fill="#c0c8d8"/><rect x="11" y="0" width="4" height="9" rx="1" fill="#d8dce8" stroke="#405070" stroke-width="0.8"/><path d="M5 12 V15 H13 V10" stroke="#20a020" stroke-width="1.4" fill="none"/><path d="M11 12 L13 9.5 L15 12" stroke="#20a020" stroke-width="1.4" fill="none"/></svg>
<svg class="r" style="left:98px;top:137px;" width="16" height="16" viewBox="0 0 16 16"><rect x="1" y="1" width="9" height="8" fill="#3a8ee6" stroke="#405070" stroke-width="1"/><rect x="1" y="10" width="9" height="2" fill="#c0c8d8"/><rect x="11" y="0" width="4" height="9" rx="1" fill="#d8dce8" stroke="#405070" stroke-width="0.8"/><path d="M5 12 V15 H9" stroke="#20a020" stroke-width="1.4" fill="none"/><path d="M10 11 L15 16 M15 11 L10 16" stroke="#e02020" stroke-width="1.6"/></svg>
<div class="r" style="left:123px;top:140px;width:8px;height:8px;background:#c4c8d0;"></div>
<svg class="r" style="left:142px;top:137px;" width="14" height="14" viewBox="0 0 14 14"><path d="M1 1 H13 L8.5 7 V13 L5.5 11 V7 Z" fill="#c8ccd4" stroke="#b0b4bc" stroke-width="0.8"/></svg>
<svg class="r" style="left:165px;top:136px;" width="14" height="16" viewBox="0 0 14 16"><path d="M11.5 9 A5.2 5.2 0 1 1 7 3.8" stroke="#00539c" stroke-width="2.4" fill="none"/><path d="M5.5 0 L11 4 L5.5 7.5 Z" fill="#00539c"/></svg>
<svg class="r" style="left:185px;top:136px;" width="18" height="17" viewBox="0 0 18 17"><path d="M4 1.5 H15 Q17 1.5 16.5 3.5 L14 4 V10 H4 Z" fill="#f0f4fa" stroke="#405878" stroke-width="1"/><path d="M6 4.5 H12 M6 6.5 H12 M6 8.5 H10" stroke="#7a90b8" stroke-width="1"/><path d="M4 2 Q2 2 2.5 4" stroke="#405878" stroke-width="1" fill="none"/><path d="M4 10 V13 Q4 15 1.5 14.5 H11" stroke="#405878" stroke-width="1" fill="#e0e8f4"/><circle cx="12.5" cy="12" r="4.5" fill="#e02828"/><path d="M10.5 10 L14.5 14 M14.5 10 L10.5 14" stroke="#fff" stroke-width="1.4"/></svg>
<div class="r" style="left:7px;top:157px;width:368px;height:499px;background:#828790;"></div>
<div class="r" style="left:8px;top:158px;width:366px;height:497px;background:#ffffff;"></div>
<svg width="0" height="0" style="position:absolute"><defs><linearGradient id="fg" x1="0" y1="0" x2="1" y2="1"><stop offset="0" stop-color="#fffce0"/><stop offset="0.45" stop-color="#f6d870"/><stop offset="1" stop-color="#c88810"/></linearGradient><linearGradient id="cg" x1="0" y1="0" x2="1" y2="0"><stop offset="0" stop-color="#d8a000"/><stop offset="0.3" stop-color="#fff0a0"/><stop offset="0.7" stop-color="#f0b800"/><stop offset="1" stop-color="#c08000"/></linearGradient><linearGradient id="bx" x1="0" y1="0" x2="0" y2="1"><stop offset="0" stop-color="#ffffff"/><stop offset="1" stop-color="#dcdcdc"/></linearGradient></defs></svg>
<svg class="r" style="left:24px;top:165px;" width="9" height="9" viewBox="0 0 9 9"><rect x="0.5" y="0.5" width="8" height="8" rx="1" fill="url(#bx)" stroke="#8c8c8c" stroke-width="1"/><path d="M2 4.5 H7" stroke="#2c4c9c" stroke-width="1.2"/></svg>
<svg class="r" style="left:39px;top:162px;" width="15" height="12" viewBox="0 0 15 12"><path d="M0.5 2 V1 Q0.5 0.5 1 0.5 H5.5 L6.5 1.5 H14.5 V11.5 H0.5 Z" fill="#f4e4a8" stroke="#a09070" stroke-width="1"/><path d="M0.5 2.5 H14.5 V11.5 H0.5 Z" fill="url(#fg)" stroke="#8a7540" stroke-width="1"/><path d="M1 11.5 H14.5 V3" stroke="#3a2a10" stroke-width="1" fill="none"/></svg>
<div class="t" style="left:60.30px;top:159.84px;font-size:12.00px;line-height:17px;color:#1e1e1e;transform:scaleX(0.9133);transform-origin:0 0;font-family:"Liberation Sans", sans-serif;">Databases</div>
<svg class="r" style="left:43px;top:183px;" width="9" height="9" viewBox="0 0 9 9"><rect x="0.5" y="0.5" width="8" height="8" rx="1" fill="url(#bx)" stroke="#8c8c8c" stroke-width="1"/><path d="M2 4.5 H7" stroke="#2c4c9c" stroke-width="1.2"/><path d="M4.5 2 V7" stroke="#2c4c9c" stroke-width="1.2"/></svg>
<svg class="r" style="left:58px;top:180px;" width="15" height="12" viewBox="0 0 15 12"><path d="M0.5 2 V1 Q0.5 0.5 1 0.5 H5.5 L6.5 1.5 H14.5 V11.5 H0.5 Z" fill="#f4e4a8" stroke="#a09070" stroke-width="1"/><path d="M0.5 2.5 H14.5 V11.5 H0.5 Z" fill="url(#fg)" stroke="#8a7540" stroke-width="1"/><path d="M1 11.5 H14.5 V3" stroke="#3a2a10" stroke-width="1" fill="none"/></svg>
<div class="t" style="left:79.30px;top:177.84px;font-size:12.00px;line-height:17px;color:#1e1e1e;transform:scaleX(0.9313);transform-origin:0 0;font-family:"Liberation Sans", sans-serif;">System Databases</div>
<svg class="r" style="left:43px;top:201px;" width="9" height="9" viewBox="0 0 9 9"><rect x="0.5" y="0.5" width="8" height="8" rx="1" fill="url(#bx)" stroke="#8c8c8c" stroke-width="1"/><path d="M2 4.5 H7" stroke="#2c4c9c" stroke-width="1.2"/><path d="M4.5 2 V7" stroke="#2c4c9c" stroke-width="1.2"/></svg>
<svg class="r" style="left:58px;top:198px;" width="15" height="12" viewBox="0 0 15 12"><path d="M0.5 2 V1 Q0.5 0.5 1 0.5 H5.5 L6.5 1.5 H14.5 V11.5 H0.5 Z" fill="#f4e4a8" stroke="#a09070" stroke-width="1"/><path d="M0.5 2.5 H14.5 V11.5 H0.5 Z" fill="url(#fg)" stroke="#8a7540" stroke-width="1"/><path d="M1 11.5 H14.5 V3" stroke="#3a2a10" stroke-width="1" fill="none"/></svg>
<div class="t" style="left:79.30px;top:195.84px;font-size:12.00px;line-height:17px;color:#1e1e1e;transform:scaleX(0.9415);transform-origin:0 0;font-family:"Liberation Sans", sans-serif;">Database Snapshots</div>
<svg class="r" style="left:43px;top:219px;" width="9" height="9" viewBox="0 0 9 9"><rect x="0.5" y="0.5" width="8" height="8" rx="1" fill="url(#bx)" stroke="#8c8c8c" stroke-width="1"/><path d="M2 4.5 H7" stroke="#2c4c9c" stroke-width="1.2"/></svg>
<svg class="r" style="left:60px;top:214px;" width="12" height="16" viewBox="0 0 12 16"><path d="M0.5 3 V13 A5.5 2.5 0 0 0 11.5 13 V3 Z" fill="url(#cg)" stroke="#a07800" stroke-width="1"/><ellipse cx="6" cy="3" rx="5.5" ry="2.5" fill="#fff4b8" stroke="#a07800" stroke-width="1"/></svg>
<div class="t" style="left:79.30px;top:213.84px;font-size:12.00px;line-height:17px;color:#1e1e1e;transform:scaleX(1.0052);transform-origin:0 0;font-family:"Liberation Sans", sans-serif;">Music</div>
<svg class="r" style="left:62px;top:237px;" width="9" height="9" viewBox="0 0 9 9"><rect x="0.5" y="0.5" width="8" height="8" rx="1" fill="url(#bx)" stroke="#8c8c8c" stroke-width="1"/><path d="M2 4.5 H7" stroke="#2c4c9c" stroke-width="1.2"/><path d="M4.5 2 V7" stroke="#2c4c9c" stroke-width="1.2"/></svg>
<svg class="r" style="left:77px;top:234px;" width="15" height="12" viewBox="0 0 15 12"><path d="M0.5 2 V1 Q0.5 0.5 1 0.5 H5.5 L6.5 1.5 H14.5 V11.5 H0.5 Z" fill="#f4e4a8" stroke="#a09070" stroke-width="1"/><path d="M0.5 2.5 H14.5 V11.5 H0.5 Z" fill="url(#fg)" stroke="#8a7540" stroke-width="1"/><path d="M1 11.5 H14.5 V3" stroke="#3a2a10" stroke-width="1" fill="none"/></svg>
<div class="t" style="left:98.30px;top:231.84px;font-size:12.00px;line-height:17px;color:#1e1e1e;transform:scaleX(0.9457);transform-origin:0 0;font-family:"Liberation Sans", sans-serif;">Database Diagrams</div>
<svg class="r" style="left:62px;top:255px;" width="9" height="9" viewBox="0 0 9 9"><rect x="0.5" y="0.5" width="8" height="8" rx="1" fill="url(#bx)" stroke="#8c8c8c" stroke-width="1"/><path d="M2 4.5 H7" stroke="#2c4c9c" stroke-width="1.2"/><path d="M4.5 2 V7" stroke="#2c4c9c" stroke-width="1.2"/></svg>
<svg class="r" style="left:77px;top:252px;" width="15" height="12" viewBox="0 0 15 12"><path d="M0.5 2 V1 Q0.5 0.5 1 0.5 H5.5 L6.5 1.5 H14.5 V11.5 H0.5 Z" fill="#f4e4a8" stroke="#a09070" stroke-width="1"/><path d="M0.5 2.5 H14.5 V11.5 H0.5 Z" fill="url(#fg)" stroke="#8a7540" stroke-width="1"/><path d="M1 11.5 H14.5 V3" stroke="#3a2a10" stroke-width="1" fill="none"/></svg>
<div class="t" style="left:98.30px;top:249.84px;font-size:12.00px;line-height:17px;color:#1e1e1e;transform:scaleX(0.9686);transform-origin:0 0;font-family:"Liberation Sans", sans-serif;">Tables</div>
<svg class="r" style="left:62px;top:273px;" width="9" height="9" viewBox="0 0 9 9"><rect x="0.5" y="0.5" width="8" height="8" rx="1" fill="url(#bx)" stroke="#8c8c8c" stroke-width="1"/><path d="M2 4.5 H7" stroke="#2c4c9c" stroke-width="1.2"/></svg>
<svg class="r" style="left:77px;top:270px;" width="15" height="12" viewBox="0 0 15 12"><path d="M0.5 2 V1 Q0.5 0.5 1 0.5 H5.5 L6.5 1.5 H14.5 V11.5 H0.5 Z" fill="#f4e4a8" stroke="#a09070" stroke-width="1"/><path d="M0.5 2.5 H14.5 V11.5 H0.5 Z" fill="url(#fg)" stroke="#8a7540" stroke-width="1"/><path d="M1 11.5 H14.5 V3" stroke="#3a2a10" stroke-width="1" fill="none"/></svg>
<div class="t" style="left:98.30px;top:267.84px;font-size:12.00px;line-height:17px;color:#1e1e1e;transform:scaleX(0.9278);transform-origin:0 0;font-family:"Liberation Sans", sans-serif;">Views</div>
<svg class="r" style="left:81px;top:291px;" width="9" height="9" viewBox="0 0 9 9"><rect x="0.5" y="0.5" width="8" height="8" rx="1" fill="url(#bx)" stroke="#8c8c8c" stroke-width="1"/><path d="M2 4.5 H7" stroke="#2c4c9c" stroke-width="1.2"/><path d="M4.5 2 V7" stroke="#2c4c9c" stroke-width="1.2"/></svg>
<svg class="r" style="left:96px;top:288px;" width="15" height="12" viewBox="0 0 15 12"><path d="M0.5 2 V1 Q0.5 0.5 1 0.5 H5.5 L6.5 1.5 H14.5 V11.5 H0.5 Z" fill="#f4e4a8" stroke="#a09070" stroke-width="1"/><path d="M0.5 2.5 H14.5 V11.5 H0.5 Z" fill="url(#fg)" stroke="#8a7540" stroke-width="1"/><path d="M1 11.5 H14.5 V3" stroke="#3a2a10" stroke-width="1" fill="none"/></svg>
<div class="t" style="left:117.30px;top:285.84px;font-size:12.00px;line-height:17px;color:#1e1e1e;transform:scaleX(0.9383);transform-origin:0 0;font-family:"Liberation Sans", sans-serif;">System Views</div>
<div class="r" style="left:115px;top:304px;width:104px;height:17px;background:#eeeef2;"></div>
<svg class="r" style="left:81px;top:309px;" width="9" height="9" viewBox="0 0 9 9"><rect x="0.5" y="0.5" width="8" height="8" rx="1" fill="url(#bx)" stroke="#8c8c8c" stroke-width="1"/><path d="M2 4.5 H7" stroke="#2c4c9c" stroke-width="1.2"/></svg>
<svg class="r" style="left:96px;top:304px;" width="16" height="16" viewBox="0 0 16 16"><rect x="2.5" y="0.5" width="12" height="12" fill="#e4ecfa" stroke="#8aa0d0" stroke-width="1"/><rect x="3" y="1" width="11" height="2" fill="#7aa0e8"/><path d="M11 5 H13 M11 7 H13 M11 9 H13" stroke="#7a90c0" stroke-width="1"/><rect x="0.5" y="4.5" width="10" height="10" fill="#e8eef8" stroke="#2a3f5f" stroke-width="1.3"/><path d="M2.5 6.5 L4 8 M8.5 6.5 L7 8 M2.5 12.5 L4 11 M8.5 12.5 L7 11" stroke="#2a3f5f" stroke-width="1"/></svg>
<div class="t" style="left:117.30px;top:303.84px;font-size:12.00px;line-height:17px;color:#1e1e1e;transform:scaleX(0.9892);transform-origin:0 0;font-family:"Liberation Sans", sans-serif;">dbo.RecentAlbums</div>
<svg class="r" style="left:100px;top:327px;" width="9" height="9" viewBox="0 0 9 9"><rect x="0.5" y="0.5" width="8" height="8" rx="1" fill="url(#bx)" stroke="#8c8c8c" stroke-width="1"/><path d="M2 4.5 H7" stroke="#2c4c9c" stroke-width="1.2"/></svg>
<svg class="r" style="left:115px;top:324px;" width="15" height="12" viewBox="0 0 15 12"><path d="M0.5 2 V1 Q0.5 0.5 1 0.5 H5.5 L6.5 1.5 H14.5 V11.5 H0.5 Z" fill="#f4e4a8" stroke="#a09070" stroke-width="1"/><path d="M0.5 2.5 H14.5 V11.5 H0.5 Z" fill="url(#fg)" stroke="#8a7540" stroke-width="1"/><path d="M1 11.5 H14.5 V3" stroke="#3a2a10" stroke-width="1" fill="none"/></svg>
<div class="t" style="left:136.30px;top:321.84px;font-size:12.00px;line-height:17px;color:#1e1e1e;font-family:"Liberation Sans", sans-serif;">Columns</div>
<svg class="r" style="left:136px;top:341px;" width="12" height="13" viewBox="0 0 12 13"><defs><linearGradient id="cgr" x1="0" y1="0" x2="1" y2="0"><stop offset="0" stop-color="#ffffff"/><stop offset="1" stop-color="#c8d8f4"/></linearGradient></defs><rect x="0.5" y="0.5" width="11" height="12" fill="url(#cgr)" stroke="#4a5a80" stroke-width="1"/><rect x="1" y="1" width="10" height="2" fill="#5a8ae0"/><path d="M4 4.5 H8 M4 6.5 H8 M4 8.5 H8 M4 10.5 H8" stroke="#3a4048" stroke-width="1"/></svg>
<div class="t" style="left:155.30px;top:339.84px;font-size:12.00px;line-height:17px;color:#1e1e1e;transform:scaleX(0.9617);transform-origin:0 0;font-family:"Liberation Sans", sans-serif;">ReleaseDate (date, not null)</div>
<svg class="r" style="left:136px;top:359px;" width="12" height="13" viewBox="0 0 12 13"><defs><linearGradient id="cgr" x1="0" y1="0" x2="1" y2="0"><stop offset="0" stop-color="#ffffff"/><stop offset="1" stop-color="#c8d8f4"/></linearGradient></defs><rect x="0.5" y="0.5" width="11" height="12" fill="url(#cgr)" stroke="#4a5a80" stroke-width="1"/><rect x="1" y="1" width="10" height="2" fill="#5a8ae0"/><path d="M4 4.5 H8 M4 6.5 H8 M4 8.5 H8 M4 10.5 H8" stroke="#3a4048" stroke-width="1"/></svg>
<div class="t" style="left:155.30px;top:357.84px;font-size:12.00px;line-height:17px;color:#1e1e1e;font-family:"Liberation Sans", sans-serif;">AlbumName (nvarchar(255), not null)</div>
<svg class="r" style="left:136px;top:377px;" width="12" height="13" viewBox="0 0 12 13"><defs><linearGradient id="cgr" x1="0" y1="0" x2="1" y2="0"><stop offset="0" stop-color="#ffffff"/><stop offset="1" stop-color="#c8d8f4"/></linearGradient></defs><rect x="0.5" y="0.5" width="11" height="12" fill="url(#cgr)" stroke="#4a5a80" stroke-width="1"/><rect x="1" y="1" width="10" height="2" fill="#5a8ae0"/><path d="M4 4.5 H8 M4 6.5 H8 M4 8.5 H8 M4 10.5 H8" stroke="#3a4048" stroke-width="1"/></svg>
<div class="t" style="left:155.30px;top:375.84px;font-size:12.00px;line-height:17px;color:#1e1e1e;transform:scaleX(0.9767);transform-origin:0 0;font-family:"Liberation Sans", sans-serif;">Genre (nvarchar(50), not null)</div>
<svg class="r" style="left:136px;top:395px;" width="12" height="13" viewBox="0 0 12 13"><defs><linearGradient id="cgr" x1="0" y1="0" x2="1" y2="0"><stop offset="0" stop-color="#ffffff"/><stop offset="1" stop-color="#c8d8f4"/></linearGradient></defs><rect x="0.5" y="0.5" width="11" height="12" fill="url(#cgr)" stroke="#4a5a80" stroke-width="1"/><rect x="1" y="1" width="10" height="2" fill="#5a8ae0"/><path d="M4 4.5 H8 M4 6.5 H8 M4 8.5 H8 M4 10.5 H8" stroke="#3a4048" stroke-width="1"/></svg>
<div class="t" style="left:155.30px;top:393.84px;font-size:12.00px;line-height:17px;color:#1e1e1e;transform:scaleX(0.9940);transform-origin:0 0;font-family:"Liberation Sans", sans-serif;">ArtistName (nvarchar(255), not null)</div>
<svg class="r" style="left:115px;top:414px;" width="15" height="12" viewBox="0 0 15 12"><path d="M0.5 2 V1 Q0.5 0.5 1 0.5 H5.5 L6.5 1.5 H14.5 V11.5 H0.5 Z" fill="#f4e4a8" stroke="#a09070" stroke-width="1"/><path d="M0.5 2.5 H14.5 V11.5 H0.5 Z" fill="url(#fg)" stroke="#8a7540" stroke-width="1"/><path d="M1 11.5 H14.5 V3" stroke="#3a2a10" stroke-width="1" fill="none"/></svg>
<div class="t" style="left:136.30px;top:411.84px;font-size:12.00px;line-height:17px;color:#1e1e1e;transform:scaleX(0.9778);transform-origin:0 0;font-family:"Liberation Sans", sans-serif;">Triggers</div>
<svg class="r" style="left:115px;top:432px;" width="15" height="12" viewBox="0 0 15 12"><path d="M0.5 2 V1 Q0.5 0.5 1 0.5 H5.5 L6.5 1.5 H14.5 V11.5 H0.5 Z" fill="#f4e4a8" stroke="#a09070" stroke-width="1"/><path d="M0.5 2.5 H14.5 V11.5 H0.5 Z" fill="url(#fg)" stroke="#8a7540" stroke-width="1"/><path d="M1 11.5 H14.5 V3" stroke="#3a2a10" stroke-width="1" fill="none"/></svg>
<div class="t" style="left:136.30px;top:429.84px;font-size:12.00px;line-height:17px;color:#1e1e1e;transform:scaleX(0.9160);transform-origin:0 0;font-family:"Liberation Sans", sans-serif;">Indexes</div>
<svg class="r" style="left:115px;top:450px;" width="15" height="12" viewBox="0 0 15 12"><path d="M0.5 2 V1 Q0.5 0.5 1 0.5 H5.5 L6.5 1.5 H14.5 V11.5 H0.5 Z" fill="#f4e4a8" stroke="#a09070" stroke-width="1"/><path d="M0.5 2.5 H14.5 V11.5 H0.5 Z" fill="url(#fg)" stroke="#8a7540" stroke-width="1"/><path d="M1 11.5 H14.5 V3" stroke="#3a2a10" stroke-width="1" fill="none"/></svg>
<div class="t" style="left:136.30px;top:447.84px;font-size:12.00px;line-height:17px;color:#1e1e1e;transform:scaleX(0.9456);transform-origin:0 0;font-family:"Liberation Sans", sans-serif;">Statistics</div>
<svg class="r" style="left:62px;top:471px;" width="9" height="9" viewBox="0 0 9 9"><rect x="0.5" y="0.5" width="8" height="8" rx="1" fill="url(#bx)" stroke="#8c8c8c" stroke-width="1"/><path d="M2 4.5 H7" stroke="#2c4c9c" stroke-width="1.2"/><path d="M4.5 2 V7" stroke="#2c4c9c" stroke-width="1.2"/></svg>
<svg class="r" style="left:77px;top:468px;" width="15" height="12" viewBox="0 0 15 12"><path d="M0.5 2 V1 Q0.5 0.5 1 0.5 H5.5 L6.5 1.5 H14.5 V11.5 H0.5 Z" fill="#f4e4a8" stroke="#a09070" stroke-width="1"/><path d="M0.5 2.5 H14.5 V11.5 H0.5 Z" fill="url(#fg)" stroke="#8a7540" stroke-width="1"/><path d="M1 11.5 H14.5 V3" stroke="#3a2a10" stroke-width="1" fill="none"/></svg>
<div class="t" style="left:98.30px;top:465.84px;font-size:12.00px;line-height:17px;color:#1e1e1e;transform:scaleX(0.9359);transform-origin:0 0;font-family:"Liberation Sans", sans-serif;">External Resources</div>
<svg class="r" style="left:62px;top:489px;" width="9" height="9" viewBox="0 0 9 9"><rect x="0.5" y="0.5" width="8" height="8" rx="1" fill="url(#bx)" stroke="#8c8c8c" stroke-width="1"/><path d="M2 4.5 H7" stroke="#2c4c9c" stroke-width="1.2"/><path d="M4.5 2 V7" stroke="#2c4c9c" stroke-width="1.2"/></svg>
<svg class="r" style="left:77px;top:486px;" width="15" height="12" viewBox="0 0 15 12"><path d="M0.5 2 V1 Q0.5 0.5 1 0.5 H5.5 L6.5 1.5 H14.5 V11.5 H0.5 Z" fill="#f4e4a8" stroke="#a09070" stroke-width="1"/><path d="M0.5 2.5 H14.5 V11.5 H0.5 Z" fill="url(#fg)" stroke="#8a7540" stroke-width="1"/><path d="M1 11.5 H14.5 V3" stroke="#3a2a10" stroke-width="1" fill="none"/></svg>
<div class="t" style="left:98.30px;top:483.84px;font-size:12.00px;line-height:17px;color:#1e1e1e;transform:scaleX(0.9728);transform-origin:0 0;font-family:"Liberation Sans", sans-serif;">Synonyms</div>
<svg class="r" style="left:62px;top:507px;" width="9" height="9" viewBox="0 0 9 9"><rect x="0.5" y="0.5" width="8" height="8" rx="1" fill="url(#bx)" stroke="#8c8c8c" stroke-width="1"/><path d="M2 4.5 H7" stroke="#2c4c9c" stroke-width="1.2"/><path d="M4.5 2 V7" stroke="#2c4c9c" stroke-width="1.2"/></svg>
<svg class="r" style="left:77px;top:504px;" width="15" height="12" viewBox="0 0 15 12"><path d="M0.5 2 V1 Q0.5 0.5 1 0.5 H5.5 L6.5 1.5 H14.5 V11.5 H0.5 Z" fill="#f4e4a8" stroke="#a09070" stroke-width="1"/><path d="M0.5 2.5 H14.5 V11.5 H0.5 Z" fill="url(#fg)" stroke="#8a7540" stroke-width="1"/><path d="M1 11.5 H14.5 V3" stroke="#3a2a10" stroke-width="1" fill="none"/></svg>
<div class="t" style="left:98.30px;top:501.84px;font-size:12.00px;line-height:17px;color:#1e1e1e;transform:scaleX(1.0255);transform-origin:0 0;font-family:"Liberation Sans", sans-serif;">Programmability</div>
<svg class="r" style="left:62px;top:525px;" width="9" height="9" viewBox="0 0 9 9"><rect x="0.5" y="0.5" width="8" height="8" rx="1" fill="url(#bx)" stroke="#8c8c8c" stroke-width="1"/><path d="M2 4.5 H7" stroke="#2c4c9c" stroke-width="1.2"/><path d="M4.5 2 V7" stroke="#2c4c9c" stroke-width="1.2"/></svg>
<svg class="r" style="left:77px;top:522px;" width="15" height="12" viewBox="0 0 15 12"><path d="M0.5 2 V1 Q0.5 0.5 1 0.5 H5.5 L6.5 1.5 H14.5 V11.5 H0.5 Z" fill="#f4e4a8" stroke="#a09070" stroke-width="1"/><path d="M0.5 2.5 H14.5 V11.5 H0.5 Z" fill="url(#fg)" stroke="#8a7540" stroke-width="1"/><path d="M1 11.5 H14.5 V3" stroke="#3a2a10" stroke-width="1" fill="none"/></svg>
<div class="t" style="left:98.30px;top:519.84px;font-size:12.00px;line-height:17px;color:#1e1e1e;transform:scaleX(0.9365);transform-origin:0 0;font-family:"Liberation Sans", sans-serif;">Service Broker</div>
<svg class="r" style="left:62px;top:543px;" width="9" height="9" viewBox="0 0 9 9"><rect x="0.5" y="0.5" width="8" height="8" rx="1" fill="url(#bx)" stroke="#8c8c8c" stroke-width="1"/><path d="M2 4.5 H7" stroke="#2c4c9c" stroke-width="1.2"/><path d="M4.5 2 V7" stroke="#2c4c9c" stroke-width="1.2"/></svg>
<svg class="r" style="left:77px;top:540px;" width="15" height="12" viewBox="0 0 15 12"><path d="M0.5 2 V1 Q0.5 0.5 1 0.5 H5.5 L6.5 1.5 H14.5 V11.5 H0.5 Z" fill="#f4e4a8" stroke="#a09070" stroke-width="1"/><path d="M0.5 2.5 H14.5 V11.5 H0.5 Z" fill="url(#fg)" stroke="#8a7540" stroke-width="1"/><path d="M1 11.5 H14.5 V3" stroke="#3a2a10" stroke-width="1" fill="none"/></svg>
<div class="t" style="left:98.30px;top:537.84px;font-size:12.00px;line-height:17px;color:#1e1e1e;transform:scaleX(0.9445);transform-origin:0 0;font-family:"Liberation Sans", sans-serif;">Storage</div>
<svg class="r" style="left:62px;top:561px;" width="9" height="9" viewBox="0 0 9 9"><rect x="0.5" y="0.5" width="8" height="8" rx="1" fill="url(#bx)" stroke="#8c8c8c" stroke-width="1"/><path d="M2 4.5 H7" stroke="#2c4c9c" stroke-width="1.2"/><path d="M4.5 2 V7" stroke="#2c4c9c" stroke-width="1.2"/></svg>
<svg class="r" style="left:77px;top:558px;" width="15" height="12" viewBox="0 0 15 12"><path d="M0.5 2 V1 Q0.5 0.5 1 0.5 H5.5 L6.5 1.5 H14.5 V11.5 H0.5 Z" fill="#f4e4a8" stroke="#a09070" stroke-width="1"/><path d="M0.5 2.5 H14.5 V11.5 H0.5 Z" fill="url(#fg)" stroke="#8a7540" stroke-width="1"/><path d="M1 11.5 H14.5 V3" stroke="#3a2a10" stroke-width="1" fill="none"/></svg>
<div class="t" style="left:98.30px;top:555.84px;font-size:12.00px;line-height:17px;color:#1e1e1e;transform:scaleX(0.9643);transform-origin:0 0;font-family:"Liberation Sans", sans-serif;">Security</div>
<svg class="r" style="left:43px;top:579px;" width="9" height="9" viewBox="0 0 9 9"><rect x="0.5" y="0.5" width="8" height="8" rx="1" fill="url(#bx)" stroke="#8c8c8c" stroke-width="1"/><path d="M2 4.5 H7" stroke="#2c4c9c" stroke-width="1.2"/><path d="M4.5 2 V7" stroke="#2c4c9c" stroke-width="1.2"/></svg>
<svg class="r" style="left:60px;top:574px;" width="12" height="16" viewBox="0 0 12 16"><path d="M0.5 3 V13 A5.5 2.5 0 0 0 11.5 13 V3 Z" fill="url(#cg)" stroke="#a07800" stroke-width="1"/><ellipse cx="6" cy="3" rx="5.5" ry="2.5" fill="#fff4b8" stroke="#a07800" stroke-width="1"/></svg>
<div class="t" style="left:79.30px;top:573.84px;font-size:12.00px;line-height:17px;color:#1e1e1e;transform:scaleX(0.9417);transform-origin:0 0;font-family:"Liberation Sans", sans-serif;">ReportServer</div>
<svg class="r" style="left:43px;top:597px;" width="9" height="9" viewBox="0 0 9 9"><rect x="0.5" y="0.5" width="8" height="8" rx="1" fill="url(#bx)" stroke="#8c8c8c" stroke-width="1"/><path d="M2 4.5 H7" stroke="#2c4c9c" stroke-width="1.2"/><path d="M4.5 2 V7" stroke="#2c4c9c" stroke-width="1.2"/></svg>
<svg class="r" style="left:60px;top:592px;" width="12" height="16" viewBox="0 0 12 16"><path d="M0.5 3 V13 A5.5 2.5 0 0 0 11.5 13 V3 Z" fill="url(#cg)" stroke="#a07800" stroke-width="1"/><ellipse cx="6" cy="3" rx="5.5" ry="2.5" fill="#fff4b8" stroke="#a07800" stroke-width="1"/></svg>
<div class="t" style="left:79.30px;top:591.84px;font-size:12.00px;line-height:17px;color:#1e1e1e;transform:scaleX(0.9593);transform-origin:0 0;font-family:"Liberation Sans", sans-serif;">ReportServerTempDB</div>
<svg class="r" style="left:43px;top:615px;" width="9" height="9" viewBox="0 0 9 9"><rect x="0.5" y="0.5" width="8" height="8" rx="1" fill="url(#bx)" stroke="#8c8c8c" stroke-width="1"/><path d="M2 4.5 H7" stroke="#2c4c9c" stroke-width="1.2"/><path d="M4.5 2 V7" stroke="#2c4c9c" stroke-width="1.2"/></svg>
<svg class="r" style="left:60px;top:610px;" width="12" height="16" viewBox="0 0 12 16"><path d="M0.5 3 V13 A5.5 2.5 0 0 0 11.5 13 V3 Z" fill="url(#cg)" stroke="#a07800" stroke-width="1"/><ellipse cx="6" cy="3" rx="5.5" ry="2.5" fill="#fff4b8" stroke="#a07800" stroke-width="1"/></svg>
<div class="t" style="left:79.30px;top:609.84px;font-size:12.00px;line-height:17px;color:#1e1e1e;transform:scaleX(1.0060);transform-origin:0 0;font-family:"Liberation Sans", sans-serif;">WideWorldImporters</div>
<svg class="r" style="left:24px;top:633px;" width="9" height="9" viewBox="0 0 9 9"><rect x="0.5" y="0.5" width="8" height="8" rx="1" fill="url(#bx)" stroke="#8c8c8c" stroke-width="1"/><path d="M2 4.5 H7" stroke="#2c4c9c" stroke-width="1.2"/><path d="M4.5 2 V7" stroke="#2c4c9c" stroke-width="1.2"/></svg>
<svg class="r" style="left:39px;top:630px;" width="15" height="12" viewBox="0 0 15 12"><path d="M0.5 2 V1 Q0.5 0.5 1 0.5 H5.5 L6.5 1.5 H14.5 V11.5 H0.5 Z" fill="#f4e4a8" stroke="#a09070" stroke-width="1"/><path d="M0.5 2.5 H14.5 V11.5 H0.5 Z" fill="url(#fg)" stroke="#8a7540" stroke-width="1"/><path d="M1 11.5 H14.5 V3" stroke="#3a2a10" stroke-width="1" fill="none"/></svg>
<div class="t" style="left:60.30px;top:627.84px;font-size:12.00px;line-height:17px;color:#1e1e1e;transform:scaleX(0.9643);transform-origin:0 0;font-family:"Liberation Sans", sans-serif;">Security</div>
<div class="r" style="left:356px;top:159px;width:17px;height:495px;background:#e8e8ec;"></div>
<div class="r" style="left:9px;top:637px;width:364px;height:17px;background:#e8e8ec;"></div>
<svg class="r" style="left:360px;top:164px;" width="9" height="6" viewBox="0 0 9 6"><path d="M0 5 L4.5 0.5 L9 5 Z" fill="#868999"/></svg>
<div class="r" style="left:360px;top:189px;width:9px;height:329px;background:#c9cacf;"></div>
<svg class="r" style="left:360px;top:626px;" width="9" height="5" viewBox="0 0 9 5"><path d="M0 0 H9 L4.5 5 Z" fill="#868999"/></svg>
<svg class="r" style="left:15px;top:641px;" width="5" height="9" viewBox="0 0 5 9"><path d="M5 0 V9 L0 4.5 Z" fill="#868999"/></svg>
<div class="r" style="left:34px;top:641px;width:252px;height:9px;background:#c9cacf;"></div>
<svg class="r" style="left:345px;top:641px;" width="5" height="9" viewBox="0 0 5 9"><path d="M0 0 V9 L5 4.5 Z" fill="#868999"/></svg>
<div class="r" style="left:382px;top:109px;width:262px;height:21px;background:#fff29d;"></div>
<div class="t" style="left:386.00px;top:112.24px;font-size:12.00px;line-height:17px;color:#1e1e1e;transform:scaleX(0.9482);transform-origin:0 0;font-family:"Liberation Sans", sans-serif;">SQLQuery36.sql -...GUQD9KH\Fred (52))*</div>
<svg class="r" style="left:611px;top:116px;" width="9" height="7" viewBox="0 0 9 7"><path d="M0 3.5 H3 M3 0.5 V6.5" stroke="#5a5640" stroke-width="1.2"/><rect x="3.5" y="1.5" width="5" height="4" fill="none" stroke="#5a5640" stroke-width="1.2"/><rect x="3.5" y="4" width="5" height="1.5" fill="#5a5640"/></svg>
<svg class="r" style="left:629px;top:115px;" width="10" height="8" viewBox="0 0 10 8"><path d="M0.5 0.5 L9.5 7.5 M9.5 0.5 L0.5 7.5" stroke="#5a5640" stroke-width="1.3"/></svg>
<div class="r" style="left:644px;top:109px;width:262px;height:19px;background:#364e6f;"></div>
<div class="t" style="left:648.40px;top:112.24px;font-size:12.00px;line-height:17px;color:#ffffff;transform:scaleX(0.9464);transform-origin:0 0;font-family:"Liberation Sans", sans-serif;">SQLQuery34.sql -...GUQD9KH\Fred (56))*</div>
<svg class="r" style="left:911px;top:118px;" width="8" height="5" viewBox="0 0 8 5"><path d="M0 0 H8 L4 5 Z" fill="#ced4dd"/></svg>
<div class="r" style="left:382px;top:128px;width:540px;height:2px;background:#fff29d;"></div>
<div class="r" style="left:382px;top:130px;width:540px;height:527px;background:#8e9bbc;"></div>
<div class="r" style="left:383px;top:130px;width:538px;height:246px;background:#ffffff;"></div>
<div class="r" style="left:383px;top:130px;width:17px;height:246px;background:#e6e7e8;"></div>
<div class="r" style="left:402.4px;top:130px;width:5.2px;height:224px;background:#fee762;"></div>
<svg class="r" style="left:410px;top:134px;" width="9" height="220" viewBox="0 0 9 220"><rect x="0.5" y="0.5" width="8" height="8" fill="#fff" stroke="#a5a5a5" stroke-width="1"/><path d="M2 4.5 H7" stroke="#505050" stroke-width="1.2"/><path d="M5.5 10 V219.5 H9" stroke="#a5a5a5" stroke-width="1" fill="none"/></svg>
<div class="r" style="left:419px;top:338px;width:485px;height:16px;background:transparent;border:2px solid #e8e8f0;box-sizing:border-box;"></div>
<div class="t" style="left:421px;top:131.23px;font-size:12.3px;letter-spacing:-0.380px;line-height:16px;-webkit-text-stroke:0.08px currentColor;font-family:'Liberation Mono',monospace;"><span style="color:#0000ff">CREATE VIEW </span><span style="color:#1e1e1e">RecentAlbums</span></div>
<div class="t" style="left:421px;top:147.23px;font-size:12.3px;letter-spacing:-0.380px;line-height:16px;-webkit-text-stroke:0.08px currentColor;font-family:'Liberation Mono',monospace;"><span style="color:#0000ff">AS</span></div>
<div class="t" style="left:421px;top:163.23px;font-size:12.3px;letter-spacing:-0.380px;line-height:16px;-webkit-text-stroke:0.08px currentColor;font-family:'Liberation Mono',monospace;"><span style="color:#0000ff">SELECT  </span><span style="color:#1e1e1e">Albums</span><span style="color:#808080">.</span><span style="color:#1e1e1e">ReleaseDate</span><span style="color:#808080">,</span></div>
<div class="t" style="left:421px;top:179.23px;font-size:12.3px;letter-spacing:-0.380px;line-height:16px;-webkit-text-stroke:0.08px currentColor;font-family:'Liberation Mono',monospace;"><span style="color:#1e1e1e">        Albums</span><span style="color:#808080">.</span><span style="color:#1e1e1e">AlbumName</span><span style="color:#808080">,</span></div>
<div class="t" style="left:421px;top:195.23px;font-size:12.3px;letter-spacing:-0.380px;line-height:16px;-webkit-text-stroke:0.08px currentColor;font-family:'Liberation Mono',monospace;"><span style="color:#1e1e1e">        Genres</span><span style="color:#808080">.</span><span style="color:#1e1e1e">Genre</span><span style="color:#808080">,</span></div>
<div class="t" style="left:421px;top:211.23px;font-size:12.3px;letter-spacing:-0.380px;line-height:16px;-webkit-text-stroke:0.08px currentColor;font-family:'Liberation Mono',monospace;"><span style="color:#1e1e1e">        Artists</span><span style="color:#808080">.</span><span style="color:#1e1e1e">ArtistName</span></div>
<div class="t" style="left:421px;top:227.23px;font-size:12.3px;letter-spacing:-0.380px;line-height:16px;-webkit-text-stroke:0.08px currentColor;font-family:'Liberation Mono',monospace;"><span style="color:#0000ff">FROM </span><span style="color:#1e1e1e">Albums</span></div>
<div class="t" style="left:421px;top:243.23px;font-size:12.3px;letter-spacing:-0.380px;line-height:16px;-webkit-text-stroke:0.08px currentColor;font-family:'Liberation Mono',monospace;"><span style="color:#808080">INNER JOIN</span></div>
<div class="t" style="left:421px;top:259.23px;font-size:12.3px;letter-spacing:-0.380px;line-height:16px;-webkit-text-stroke:0.08px currentColor;font-family:'Liberation Mono',monospace;"><span style="color:#1e1e1e">        Artists </span><span style="color:#0000ff">ON</span></div>
<div class="t" style="left:421px;top:275.23px;font-size:12.3px;letter-spacing:-0.380px;line-height:16px;-webkit-text-stroke:0.08px currentColor;font-family:'Liberation Mono',monospace;"><span style="color:#1e1e1e">        Albums</span><span style="color:#808080">.</span><span style="color:#1e1e1e">ArtistId </span><span style="color:#808080">=</span><span style="color:#1e1e1e"> Artists</span><span style="color:#808080">.</span><span style="color:#1e1e1e">ArtistId</span></div>
<div class="t" style="left:421px;top:291.23px;font-size:12.3px;letter-spacing:-0.380px;line-height:16px;-webkit-text-stroke:0.08px currentColor;font-family:'Liberation Mono',monospace;"><span style="color:#808080">        INNER JOIN</span></div>
<div class="t" style="left:421px;top:307.23px;font-size:12.3px;letter-spacing:-0.380px;line-height:16px;-webkit-text-stroke:0.08px currentColor;font-family:'Liberation Mono',monospace;"><span style="color:#1e1e1e">            Genres </span><span style="color:#0000ff">ON</span></div>
<div class="t" style="left:421px;top:323.23px;font-size:12.3px;letter-spacing:-0.380px;line-height:16px;-webkit-text-stroke:0.08px currentColor;font-family:'Liberation Mono',monospace;"><span style="color:#1e1e1e">            Albums</span><span style="color:#808080">.</span><span style="color:#1e1e1e">GenreId </span><span style="color:#808080">=</span><span style="color:#1e1e1e"> Genres</span><span style="color:#808080">.</span><span style="color:#1e1e1e">GenreId</span></div>
<div class="t" style="left:421px;top:339.23px;font-size:12.3px;letter-spacing:-0.380px;line-height:16px;-webkit-text-stroke:0.08px currentColor;font-family:'Liberation Mono',monospace;"><span style="color:#0000ff">WHERE   </span><span style="color:#808080">(</span><span style="color:#1e1e1e">Albums</span><span style="color:#808080">.</span><span style="color:#1e1e1e">ReleaseDate </span><span style="color:#808080">&gt;</span><span style="color:#1e1e1e"> </span><span style="color:#ff00ff">DATEADD</span><span style="color:#808080">(</span><span style="color:#ff00ff">year</span><span style="color:#808080">,</span><span style="color:#1e1e1e"> </span><span style="color:#808080">-</span><span style="color:#1e1e1e"> 10</span><span style="color:#808080">,</span><span style="color:#1e1e1e"> </span><span style="color:#ff00ff">GETDATE</span><span style="color:#808080">()));</span></div>
<div class="r" style="left:904px;top:130px;width:17px;height:246px;background:#e8e8ec;"></div>
<div class="r" style="left:904px;top:130px;width:17px;height:17px;background:#e8eef8;border:1px solid #c8d0e0;box-sizing:border-box;"></div>
<svg class="r" style="left:907px;top:132px;" width="11" height="14" viewBox="0 0 11 14"><path d="M0 4.5 H11 M0 7.5 H11" stroke="#1e1e1e" stroke-width="1"/><path d="M5.5 1 V4 M5.5 8 V13" stroke="#1e1e1e" stroke-width="1"/><path d="M3.5 3 L5.5 0.5 L7.5 3 Z M3.5 10.5 L5.5 13 L7.5 10.5 Z" fill="#1e1e1e"/></svg>
<svg class="r" style="left:908px;top:153px;" width="9" height="5" viewBox="0 0 9 5"><path d="M0 5 L4.5 0.5 L9 5 Z" fill="#868999"/></svg>
<div class="r" style="left:909px;top:164px;width:8px;height:103px;background:#c9cacf;"></div>
<div class="r" style="left:905px;top:162px;width:4px;height:97px;background:#fee762;"></div>
<div class="r" style="left:904px;top:253px;width:17px;height:2px;background:#0000e0;"></div>
<svg class="r" style="left:908px;top:365px;" width="9" height="5" viewBox="0 0 9 5"><path d="M0 0 H9 L4.5 5 Z" fill="#868999"/></svg>
<div class="r" style="left:383px;top:376px;width:538px;height:17px;background:#e8e8ec;"></div>
<div class="r" style="left:384px;top:376px;width:59px;height:16px;background:#ffffff;border:1px solid #c6cad6;box-sizing:border-box;"></div>
<div class="t" style="left:386.00px;top:376.62px;font-size:11.50px;line-height:16px;color:#1e1e1e;transform:scaleX(0.9353);transform-origin:0 0;font-family:"Liberation Sans", sans-serif;">100 %</div>
<svg class="r" style="left:434px;top:384px;" width="6" height="3" viewBox="0 0 6 3"><path d="M0 0 H6 L3 3 Z" fill="#1e1e1e"/></svg>
<svg class="r" style="left:449px;top:380px;" width="5" height="9" viewBox="0 0 5 9"><path d="M5 0 V9 L0 4.5 Z" fill="#868999"/></svg>
<div class="r" style="left:460px;top:380px;width:326px;height:9px;background:#c9cacf;"></div>
<svg class="r" style="left:893px;top:380px;" width="5" height="9" viewBox="0 0 5 9"><path d="M0 0 V9 L5 4.5 Z" fill="#868999"/></svg>
<div class="r" style="left:383px;top:393px;width:538px;height:241px;background:#f0f0f2;"></div>
<div class="r" style="left:384px;top:418px;width:535px;height:213px;background:#ffffff;border:1px solid #d4d6de;box-sizing:border-box;"></div>
<div class="r" style="left:384px;top:397px;width:85px;height:22px;background:#ffffff;border:1px solid #d4d6de;border-bottom:none;box-sizing:border-box;"></div>
<svg class="r" style="left:390px;top:398px;" width="18" height="18" viewBox="0 0 18 18"><rect x="2.5" y="1.5" width="7" height="15" fill="#f4f8fc" stroke="#8088c8" stroke-width="1"/><path d="M3 1.5 H9" stroke="#909090" stroke-width="1"/><path d="M4 6.5 H8 M4 9.5 H8" stroke="#b0b8c8" stroke-width="1"/><rect x="3" y="11" width="5" height="4" fill="#c8e0f8"/><path d="M8.5 5.5 H14 L17.5 9 V17.5 H8.5 Z" fill="#ffffff" stroke="#303a78" stroke-width="1"/><path d="M15.5 8 V17.5 H9" stroke="#1a2060" stroke-width="1.2" fill="none"/><path d="M10 8.5 H13 M10 10.5 H13 M10 12.5 H13 M10 14.5 H13" stroke="#f05030" stroke-width="1"/><path d="M14 8.5 H15 M14 10.5 H15 M14 12.5 H15 M14 14.5 H15" stroke="#30a030" stroke-width="1"/></svg>
<div class="t" style="left:413.30px;top:400.34px;font-size:12.00px;line-height:17px;color:#1e1e1e;transform:scaleX(0.8411);transform-origin:0 0;font-family:"Liberation Sans", sans-serif;">Messages</div>
<div class="t" style="left:408px;top:420px;font-size:11.67px;line-height:16px;font-family:'Liberation Mono',monospace;color:#1e1e1e;-webkit-text-stroke:0;">Command(s) completed successfully.</div>
<div class="r" style="left:900px;top:420px;width:17px;height:193px;background:#e8e8ec;"></div>
<svg class="r" style="left:904px;top:426px;" width="9" height="5" viewBox="0 0 9 5"><path d="M0 5 L4.5 0.5 L9 5 Z" fill="#868999"/></svg>
<div class="r" style="left:904px;top:437px;width:9px;height:136px;background:#c9cacf;"></div>
<svg class="r" style="left:904px;top:601px;" width="9" height="5" viewBox="0 0 9 5"><path d="M0 0 H9 L4.5 5 Z" fill="#868999"/></svg>
<div class="r" style="left:385px;top:612px;width:532px;height:17px;background:#e8e8ec;"></div>
<div class="r" style="left:387px;top:612px;width:59px;height:16px;background:#ffffff;border:1px solid #c6cad6;box-sizing:border-box;"></div>
<div class="t" style="left:389.00px;top:612.62px;font-size:11.50px;line-height:16px;color:#1e1e1e;transform:scaleX(0.9353);transform-origin:0 0;font-family:"Liberation Sans", sans-serif;">100 %</div>
<svg class="r" style="left:437px;top:620px;" width="6" height="3" viewBox="0 0 6 3"><path d="M0 0 H6 L3 3 Z" fill="#1e1e1e"/></svg>
<svg class="r" style="left:453px;top:616px;" width="5" height="9" viewBox="0 0 5 9"><path d="M5 0 V9 L0 4.5 Z" fill="#c4c6d0"/></svg>
<svg class="r" style="left:889px;top:616px;" width="5" height="9" viewBox="0 0 5 9"><path d="M0 0 V9 L5 4.5 Z" fill="#c4c6d0"/></svg>
<div class="r" style="left:382px;top:634px;width:539px;height:22px;background:#f2e89c;"></div>
<svg class="r" style="left:386px;top:637px;" width="16" height="16" viewBox="0 0 16 16"><defs><radialGradient id="okg" cx="0.3" cy="0.25" r="0.8"><stop offset="0" stop-color="#a0e890"/><stop offset="0.45" stop-color="#4aa84a"/><stop offset="1" stop-color="#2a7a2a"/></radialGradient></defs><circle cx="8" cy="8" r="7.6" fill="url(#okg)" stroke="#1a6a1a" stroke-width="0.8"/><path d="M4 8.5 L7 11 L12.5 5" stroke="#fff" stroke-width="1.8" fill="none"/></svg>
<div class="r" style="left:410px;top:638px;width:1px;height:14px;background:#fdfae0;"></div>
<div class="r" style="left:591px;top:638px;width:1px;height:14px;background:#fdfae0;"></div>
<div class="r" style="left:764px;top:638px;width:1px;height:14px;background:#fdfae0;"></div>
<div class="r" style="left:808px;top:638px;width:1px;height:14px;background:#fdfae0;"></div>
<div class="r" style="left:864px;top:638px;width:1px;height:14px;background:#fdfae0;"></div>
<div class="t" style="left:416.00px;top:636.84px;font-size:12.00px;line-height:17px;color:#1e1e1e;transform:scaleX(0.9041);transform-origin:0 0;font-family:"Liberation Sans", sans-serif;">DESKTOP-GUQD9KH (13.0 RTM)</div>
<div class="t" style="left:597.00px;top:636.84px;font-size:12.00px;line-height:17px;color:#1e1e1e;transform:scaleX(0.9159);transform-origin:0 0;font-family:"Liberation Sans", sans-serif;">DESKTOP-GUQD9KH\Fred (52)</div>
<div class="t" style="left:769.40px;top:636.84px;font-size:12.00px;line-height:17px;color:#1e1e1e;transform:scaleX(0.9893);transform-origin:0 0;font-family:"Liberation Sans", sans-serif;">Music</div>
<div class="t" style="left:814.30px;top:636.84px;font-size:12.00px;line-height:17px;color:#1e1e1e;transform:scaleX(0.9076);transform-origin:0 0;font-family:"Liberation Sans", sans-serif;">00:00:00</div>
<div class="t" style="left:869.50px;top:636.84px;font-size:12.00px;line-height:17px;color:#1e1e1e;transform:scaleX(0.9535);transform-origin:0 0;font-family:"Liberation Sans", sans-serif;">0 rows</div>
<div class="r" style="left:0px;top:663px;width:928px;height:22px;background:#007acc;"></div>
<div class="r" style="left:0px;top:685px;width:928px;height:2px;background:#2d2a28;"></div>
<div class="r" style="left:0px;top:685px;width:8px;height:2px;background:#0a0a0a;"></div>
<div class="t" style="left:4.20px;top:666.84px;font-size:12.00px;line-height:17px;color:#ffffff;transform:scaleX(0.8937);transform-origin:0 0;font-family:"Liberation Sans", sans-serif;">Ready</div>
<div class="t" style="left:574.70px;top:666.84px;font-size:12.00px;line-height:17px;color:#ffffff;transform:scaleX(0.8991);transform-origin:0 0;font-family:"Liberation Sans", sans-serif;">Ln 14</div>
<div class="t" style="left:666.50px;top:666.84px;font-size:12.00px;line-height:17px;color:#ffffff;transform:scaleX(0.9369);transform-origin:0 0;font-family:"Liberation Sans", sans-serif;">Col 63</div>
<div class="t" style="left:758.40px;top:666.84px;font-size:12.00px;line-height:17px;color:#ffffff;transform:scaleX(0.9243);transform-origin:0 0;font-family:"Liberation Sans", sans-serif;">Ch 63</div>
<div class="t" style="left:894.00px;top:666.84px;font-size:12.00px;line-height:17px;color:#ffffff;transform:scaleX(0.8998);transform-origin:0 0;font-family:"Liberation Sans", sans-serif;">INS</div>
<svg class="r" style="left:0px;top:0px;pointer-events:none;" width="928" height="687" viewBox="0 0 928 687"><path fill-rule="evenodd" fill="#ff9900" d="M231.5 89.4 A48.8 21.9 3 1 0 330.5 89.6 A48.8 21.9 3 1 0 231.5 89.4 Z M242.7 89.8 A39.5 14.9 2 1 0 321.7 89.8 A39.5 14.9 2 1 0 242.7 89.8 Z"/></svg>
<svg class="r" style="left:0px;top:0px;pointer-events:none;" width="928" height="687" viewBox="0 0 928 687"><path fill-rule="evenodd" fill="#ff9900" d="M31 296 H359.5 Q367.5 296 367.5 304 V473.5 H36.5 Q28.5 473.5 28.5 465.5 V298.5 Q28.5 296 31 296 Z M38.8 303.2 H357.8 V467 H38.8 Z"/></svg>
</body></html>
